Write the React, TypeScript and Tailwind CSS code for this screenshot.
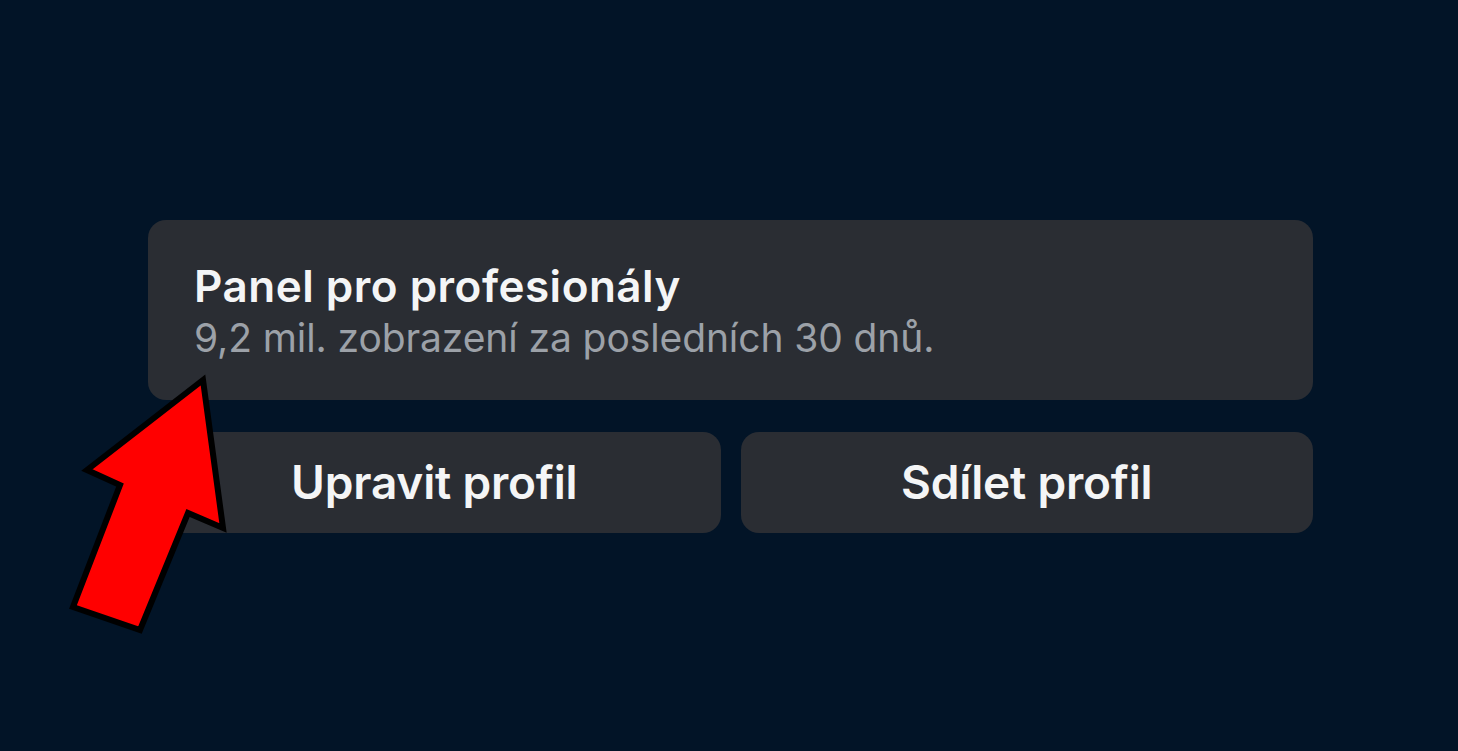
import React from "react";

export default function App() {
  return (
    <div
      className="relative w-[1458px] h-[751px] overflow-hidden bg-[#021427]"
      style={{ fontFamily: 'Inter, "Noto Sans", sans-serif' }}
    >
      <div className="pt-[220px] pl-[148px] w-[1313px] flex flex-col gap-[32px]">
        <div className="h-[180px] rounded-[18px] bg-[#2a2d33] pl-[46px] pt-[41px] flex flex-col">
          <div className="text-[44px] leading-[50px] font-semibold text-[#f4f5f6] tracking-[0.5px]">
            Panel pro profesionály
          </div>
          <div className="text-[39px] leading-[54px] text-[#9ca1a8] tracking-[-0.1px]">
            9,2 mil. zobrazení za posledních 30 dnů.
          </div>
        </div>
        <div className="flex gap-[20px]">
          <div className="flex-1 h-[101px] rounded-[18px] bg-[#2a2d33] flex items-center justify-center text-[46px] font-semibold text-[#f4f5f6] tracking-[-0.2px]">
            Upravit profil
          </div>
          <div className="flex-1 h-[101px] rounded-[18px] bg-[#2a2d33] flex items-center justify-center text-[46px] font-semibold text-[#f4f5f6] tracking-[-0.2px]">
            Sdílet profil
          </div>
        </div>
      </div>
      <svg
        className="absolute left-0 top-0"
        width="1458"
        height="751"
        viewBox="0 0 1458 751"
      >
        <polygon
          points="203,380 223,528 188,513 140,630 73,607 120,485 87,470"
          fill="#ff0000"
          stroke="#000000"
          strokeWidth="6"
          strokeLinejoin="miter"
        />
      </svg>
    </div>
  );
}
